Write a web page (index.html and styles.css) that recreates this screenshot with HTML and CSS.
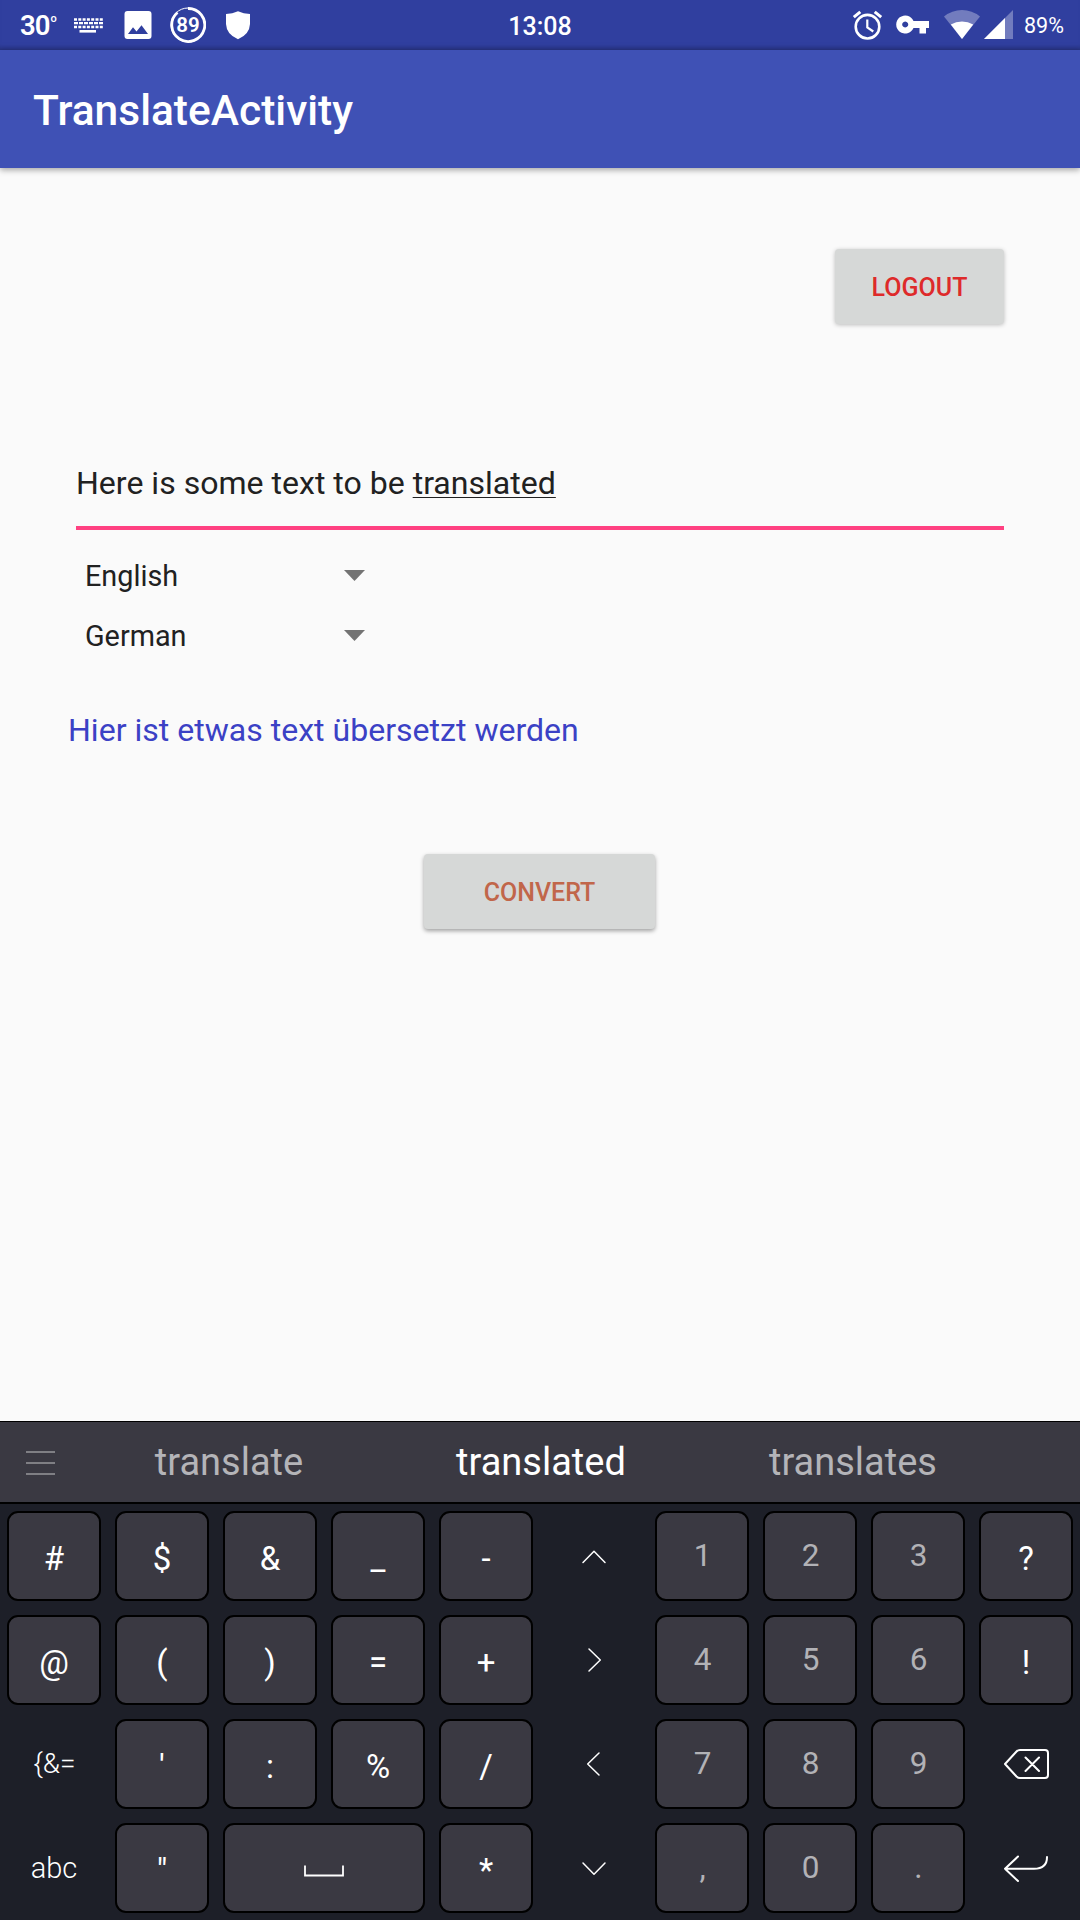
FILE: index.html
```
<!DOCTYPE html>
<html lang="en">
<head>
<meta charset="utf-8">
<title>TranslateActivity</title>
<link rel="stylesheet" href="styles.css">
</head>
<body>
<div class="status">
  <div class="status-left">
    <span class="temp">30<sup>o</sup></span>
    <svg width="36" height="50" viewBox="70 0 36 50" fill="none" stroke="#fff"><path d="M74 19.5h29M74 27h29" stroke-width="2.6" stroke-dasharray="3 1.3"/><path d="M74 23.2h29" stroke-width="2.2" stroke-dasharray="4 1"/><path d="M79.500 31.300h16.500" stroke-width="2.600"/></svg>
    <svg width="36" height="50" viewBox="120 0 36 50"><path fill="#fff" fill-rule="evenodd" d="M127.500 11h21a3 3 0 0 1 3 3v22a3 3 0 0 1-3 3h-21a3 3 0 0 1-3-3V14a3 3 0 0 1 3-3zM128 34h20l-6.500-8.800-5 6.200-3.500-4.200z"/></svg>
    <span class="ring"><svg width="36" height="50" viewBox="170 0 36 50" fill="none" stroke="#fff"><circle cx="188" cy="25" r="17" stroke-width="1"/><path d="M188 8.500A16.500 16.500 0 1 1 177.500 12.500" stroke-width="2.800"/></svg><b>89</b></span>
    <svg width="36" height="50" viewBox="220 0 36 50"><path fill="#fff" d="M238 11.300Q243.500 13.700 250 14V24Q249.500 34.500 238 39.200Q226.500 34.500 226 24V14Q232.500 13.700 238 11.300z"/></svg>
  </div>
  <span class="clock">13:08</span>
  <div class="status-right">
    <svg width="36" height="50" viewBox="850 0 36 50" fill="none" stroke="#fff"><circle cx="867.500" cy="26.700" r="11.800" stroke-width="2.600"/><path d="M867.300 19.500v8l6 4" stroke-width="2.200"/><path d="M853.800 17.200l6.500-5.400M881.200 17.200l-6.500-5.400" stroke-width="3"/></svg>
    <svg class="vpn" width="36" height="50" viewBox="895 0 36 50"><path fill="#fff" fill-rule="evenodd" d="M913.500 21H929v7h-3v5.500h-6.500V28h-6A9 9 0 1 1 913.500 21zM905.200 21.500a3 3 0 1 0 .01 0z"/></svg>
    <svg class="wifi" width="36" height="50" viewBox="944 0 36 50" fill="#fff"><path opacity=".32" d="M962 39L944 16.500Q952 10 962 10T980 16.500z"/><path d="M962 39L950.800 24.500Q956 21.600 962 21.600T973.200 24.500z"/></svg>
    <svg width="30" height="50" viewBox="984 0 30 50" fill="#fff"><path opacity=".32" d="M1013 10V39H984z"/><path d="M1005 18V39H984z"/></svg>
    <span class="battery">89%</span>
  </div>
</div>
<header class="appbar">TranslateActivity</header>
<main class="content">
  <button class="btn logout">LOGOUT</button>
  <div class="field">Here is some text to be <u>translated</u></div>
  <div class="spinner"><span>English</span><svg width="21" height="11" viewBox="0 0 21 11"><path fill="#737373" d="M0 0h21L10.500 11z"/></svg></div>
  <div class="spinner"><span>German</span><svg width="21" height="11" viewBox="0 0 21 11"><path fill="#737373" d="M0 0h21L10.500 11z"/></svg></div>
  <p class="result">Hier ist etwas text übersetzt werden</p>
  <button class="btn convert">CONVERT</button>
</main>
<section class="keyboard">
  <div class="suggest">
    <svg width="73" height="80" viewBox="0 0 73 80" stroke="#97979b" stroke-width="1.500"><path d="M26 30h29M26 41h29M26 52h29"/></svg>
    <span>translate</span><span class="active">translated</span><span>translates</span>
  </div>
  <div class="keys">
    <div class="key">#</div><div class="key">$</div><div class="key">&amp;</div><div class="key">_</div><div class="key">-</div>
    <svg class="glyph arrow" viewBox="-47 -45 94 90"><path d="M-11 6.500L0-4.700 11 6.500"/></svg>
    <div class="key num">1</div><div class="key num">2</div><div class="key num">3</div><div class="key">?</div>

    <div class="key">@</div><div class="key">(</div><div class="key">)</div><div class="key">=</div><div class="key">+</div>
    <svg class="glyph arrow" viewBox="-47 -45 94 90"><path d="M-5-11L6.300 0-5 11"/></svg>
    <div class="key num">4</div><div class="key num">5</div><div class="key num">6</div><div class="key">!</div>

    <div class="key bare sym">{&amp;=</div><div class="key">'</div><div class="key">:</div><div class="key">%</div><div class="key">/</div>
    <svg class="glyph arrow" viewBox="-47 -45 94 90"><path d="M5-11L-6.300 0 5 11"/></svg>
    <div class="key num">7</div><div class="key num">8</div><div class="key num">9</div>
    <svg class="glyph" viewBox="-47 -45 94 90"><path d="M-21 0L-9.500-12.500Q-8-14-6-14H19Q22-14 22-11V11Q22 14 19 14H-6Q-8 14-9.500 12.500zM-.5-6.500L13 7M13-6.500L-.5 7"/></svg>

    <div class="key bare">abc</div><div class="key">"</div>
    <div class="key space"><svg width="44" height="20" viewBox="-22 -8 44 20"><path d="M-19-2.500V7.500H19V-2.500" fill="none" stroke="#fff" stroke-width="1.800"/></svg></div>
    <div class="key">*</div>
    <svg class="glyph arrow" viewBox="-47 -45 94 90"><path d="M-11-5L0 6.300 11-5"/></svg>
    <div class="key num">,</div><div class="key num">0</div><div class="key num">.</div>
    <svg class="glyph" viewBox="-47 -45 94 90"><path d="M-8-11.500L-21 .8-8 13M-21 .8H8Q21 .8 21-11"/></svg>
  </div>
</section>
</body>
</html>
```
FILE: styles.css
```
* { box-sizing: border-box; }
body {
  margin: 0;
  width: 1080px;
  height: 1920px;
  display: flex;
  flex-direction: column;
  overflow: hidden;
  background: #fafafa;
  color: #212121;
  font-family: Roboto, sans-serif;
}
svg { display: block; flex: none; }
.status {
  height: 50px;
  display: grid;
  grid-template-columns: 1fr auto 1fr;
  align-items: center;
  background: #303f9f;
  box-shadow: inset 0 -6px 5px -4px #26317b;
  color: #fff;
}
.status-left, .status-right { display: flex; align-items: center; height: 50px; }
.status-left { gap: 14px; padding-left: 20px; }
.temp { width: 36px; font-size: 27.5px; font-weight: 600; line-height: 49px; white-space: nowrap; letter-spacing: -1px; }
.temp sup { font-size: 11px; font-weight: 500; line-height: 1; vertical-align: 13px; margin-left: 1px; }
.ring { display: grid; place-items: center; }
.ring > * { grid-area: 1 / 1; }
.ring b { font-size: 20.5px; font-weight: 600; line-height: 50px; }
.clock { font-size: 25px; font-weight: 500; padding-top: 3px; }
.status-right { justify-content: flex-end; padding-right: 16px; }
.vpn { margin-left: 9px; }
.wifi { margin: 0 4px 0 13px; }
.battery { width: 40px; margin-left: 10px; font-size: 21.5px; line-height: 50px; padding-top: 1px; white-space: nowrap; }
.appbar {
  height: 118px;
  padding: 3px 0 0 33px;
  background: #3f51b5;
  color: #fff;
  font-size: 42.5px;
  font-weight: 500;
  line-height: 115px;
  box-shadow: 0 2px 6px rgba(0, 0, 0, .35);
}
.content { flex: 1; display: flex; flex-direction: column; align-items: flex-start; }
.btn {
  border: 0;
  padding: 2px 0 0;
  border-radius: 4px;
  background: #d6d8d7;
  font: 500 25px/74px Roboto, sans-serif;
  box-shadow: 0 1px 4px rgba(0, 0, 0, .25);
}
.logout { width: 169px; height: 75px; margin: 81px 0 0 835px; color: #de2a2a; }
.convert { width: 231px; height: 75px; margin: 94px 0 0 424px; color: #c1664a; box-shadow: 0 2px 4px rgba(0, 0, 0, .36); }
.field {
  width: 928px;
  height: 87px;
  margin: 119px 0 0 76px;
  border-bottom: 4px solid #ff4081;
  font-size: 32.06px;
  line-height: 80px;
}
.field u { text-decoration-thickness: 1px; text-underline-offset: 3px; text-decoration-skip-ink: none; }
.spinner {
  width: 279.5px;
  height: 60px;
  margin-left: 85px;
  display: flex;
  align-items: center;
  justify-content: space-between;
  font-size: 28.8px;
}
.spinner svg { margin-bottom: 1px; }
.field + .spinner { margin-top: 16px; }
.result { margin: 34px 0 0 68px; font-size: 32.06px; line-height: 60px; color: #3b41c5; }
.keyboard { height: 499px; background: #1d1f28; border-top: 1px solid #000; }
.suggest {
  height: 82px;
  display: grid;
  grid-template-columns: 73px repeat(3, 312px);
  text-align: center;
  background: #3a3942;
  border-bottom: 2px solid #000;
  color: #b4b4b8;
  font-size: 38px;
  line-height: 80px;
}
.suggest .active { color: #fff; }
.keys { display: grid; grid-template-columns: repeat(10, 94px); grid-auto-rows: 90px; gap: 14px; padding: 7px; }
.key {
  display: flex;
  align-items: center;
  justify-content: center;
  padding-top: 5px;
  border: 2px solid #000;
  border-radius: 11px;
  background: #3a3942;
  color: #fff;
  font-size: 33px;
  line-height: 1;
}
.num { padding: 0 0 0 1px; color: #b2b2b6; font-size: 31.5px; }
.bare { padding: 0; background: none; border-color: transparent; font-size: 29px; font-weight: 300; }
.sym { padding-left: 1px; font-size: 28px; }
.space { grid-column: span 2; padding-top: 4px; }
.glyph { width: 94px; height: 90px; fill: none; stroke: #fff; stroke-width: 2; stroke-linecap: round; stroke-linejoin: round; }
.arrow { stroke-width: 1.5; }
```
